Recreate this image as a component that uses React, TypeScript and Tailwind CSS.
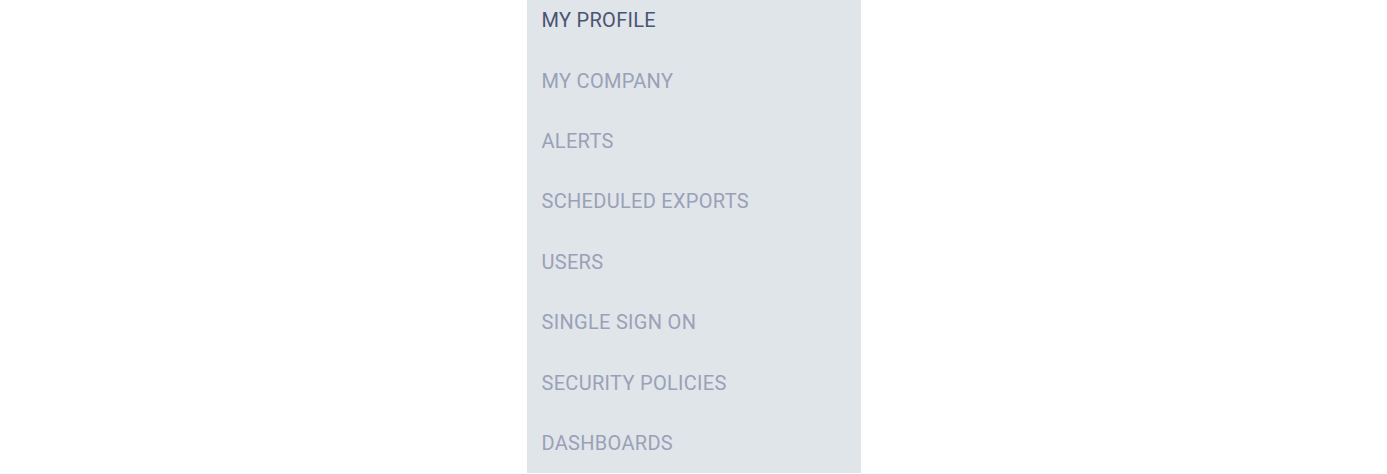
const items = [
  'MY PROFILE',
  'MY COMPANY',
  'ALERTS',
  'SCHEDULED EXPORTS',
  'USERS',
  'SINGLE SIGN ON',
  'SECURITY POLICIES',
  'DASHBOARDS',
];

export default function App() {
  return (
    <div className="w-full h-[474px] bg-white" style={{ fontFamily: 'Roboto, "Noto Sans", sans-serif' }}>
      <nav className="mx-auto w-[334px] h-[473px] bg-[#e0e5ea] overflow-hidden">
        <ul className="-mt-[10px] flex flex-col">
          {items.map((label, i) => (
            <li
              key={label}
              className={
                i === 0
                  ? 'h-[60.43px] flex items-center pl-[15px] text-[20px] tracking-[0.3px] text-[#4a5472]'
                  : 'h-[60.43px] flex items-center pl-[15px] text-[20px] tracking-[0.3px] text-[#9aa1b7]'
              }
            >
              {label}
            </li>
          ))}
        </ul>
      </nav>
    </div>
  );
}
